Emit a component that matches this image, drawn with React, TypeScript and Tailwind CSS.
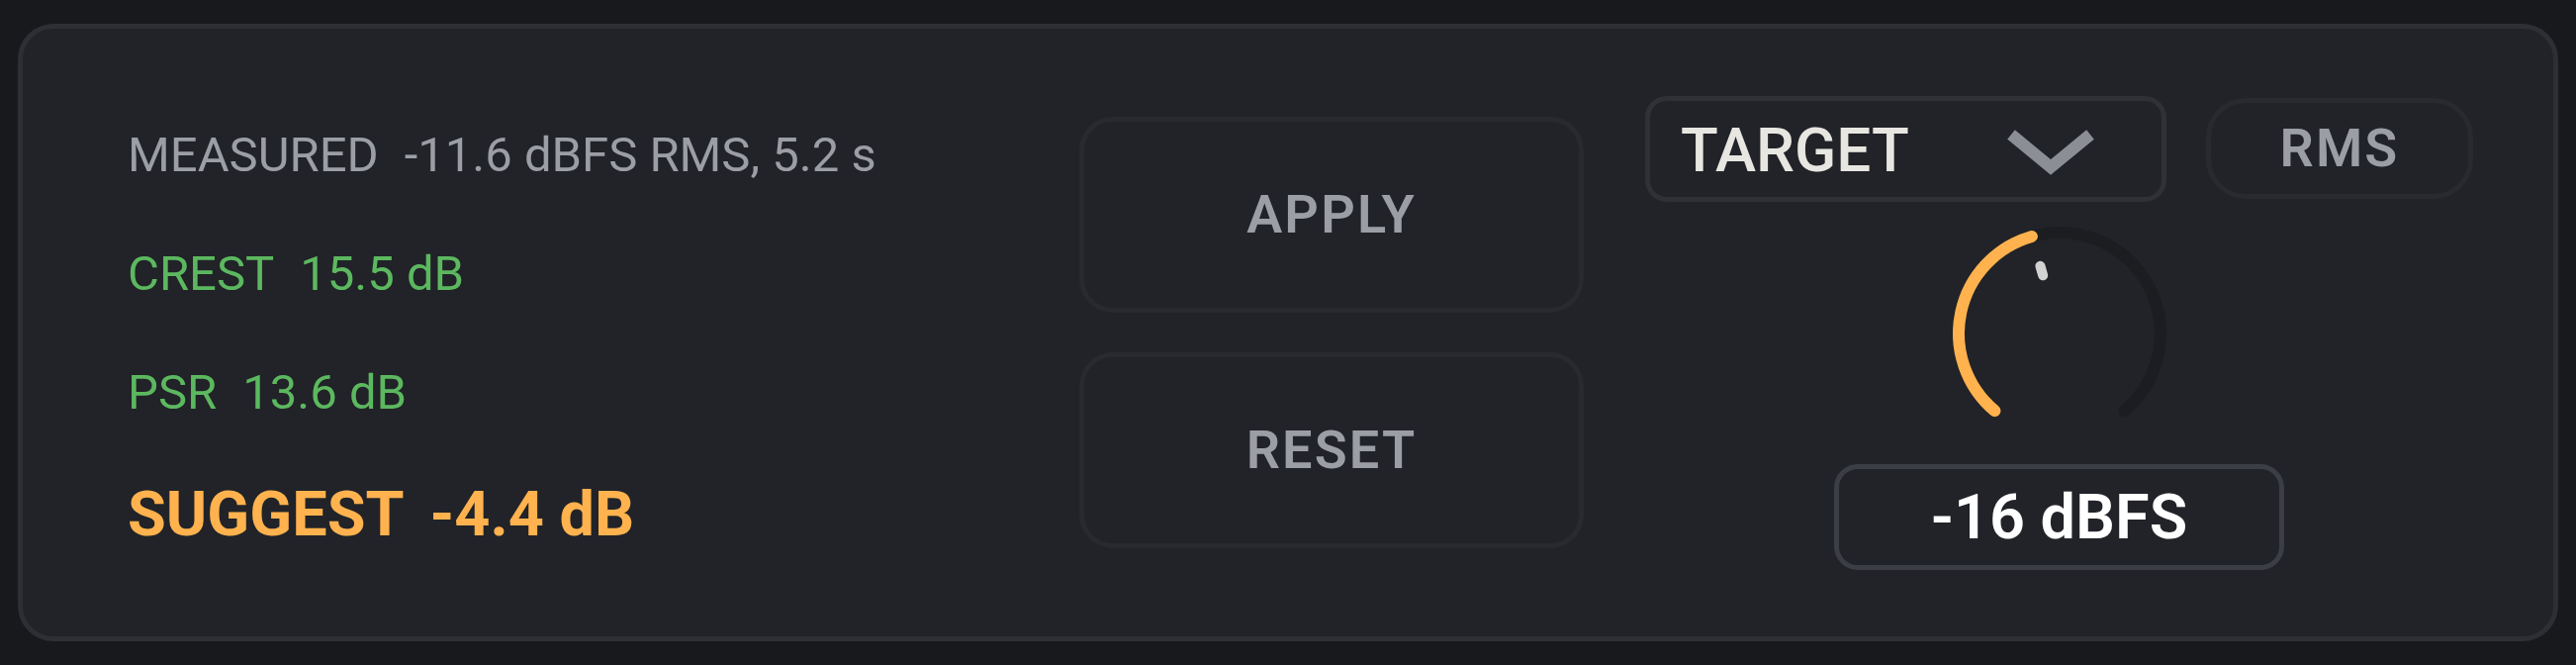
const stats = [
    { label: "MEASURED", value: "-11.6 dBFS RMS, 5.2 s", color: "text-[#9b9ea4]" },
    { label: "CREST", value: "15.5 dB", color: "text-[#5cb85f]" },
    { label: "PSR", value: "13.6 dB", color: "text-[#5cb85f]" },
];

// knob arc helpers, angle in degrees clockwise from 12 o'clock
const pt = (deg: number, r: number) => {
    const a = (deg * Math.PI) / 180;
    return `${(108 + r * Math.sin(a)).toFixed(2)} ${(108 - r * Math.cos(a)).toFixed(2)}`;
};

function Knob({ angle }: { angle: number }) {
    const start = -140;
    const end = 140;
    return (
        <svg width="216" height="216" viewBox="0 0 216 216" className="block">
            <path d={`M ${pt(start, 102)} A 102 102 0 1 1 ${pt(end, 102)}`} fill="none" stroke="#1b1d20" strokeWidth={12} strokeLinecap="round" />
            <path d={`M ${pt(start, 102)} A 102 102 0 0 1 ${pt(angle, 102)}`} fill="none" stroke="#ffb24e" strokeWidth={12} strokeLinecap="round" />
            <path d={`M ${pt(angle, 61)} L ${pt(angle, 71)}`} stroke="#d2d2d2" strokeWidth={10} strokeLinecap="round" />
        </svg>
    );
}

export default function App() {
    return (
        <div className="w-full h-[672px] bg-[#18191c] px-[18px] py-[24px] font-['Roboto',sans-serif]">
            <div className="flex h-[624px] items-center rounded-[36px] border-[5px] border-[#2d2f34] bg-[#212328] pl-[106px] pr-[81px]">

                {/* readouts */}
                <div className="flex-1 flex flex-col gap-[71px] mt-[11px]">
                    {stats.map((s) => (
                        <div key={s.label} className={`flex gap-[26px] text-[49px] leading-none ${s.color}`}>
                            <span>{s.label}</span>
                            <span>{s.value}</span>
                        </div>
                    ))}
                    <div className="flex gap-[26px] text-[63px] leading-none font-bold text-[#ffb24e] -mt-[4px]">
                        <span>SUGGEST</span>
                        <span>-4.4 dB</span>
                    </div>
                </div>

                {/* actions */}
                <div className="w-[510px] flex flex-col gap-[40px]">
                    {["APPLY", "RESET"].map((b) => (
                        <button
                            key={b}
                            className="h-[198px] flex items-center justify-center rounded-[34px] border-[5px] border-[#282a2f] text-[54px] leading-none font-semibold tracking-[0.04em] text-[#9b9ea4]"
                        >
                            {b}
                        </button>
                    ))}
                </div>

                {/* target */}
                <div className="w-[837px] ml-[62px] flex flex-col items-center">
                    <div className="flex items-center gap-[40px]">
                        <div className="w-[527px] h-[107px] flex items-center justify-between rounded-[22px] border-[5px] border-[#2f3136] pl-[31px] pr-[66px]">
                            <span className="text-[62px] leading-none font-medium text-[#e8e6e1] mt-[4px]">TARGET</span>
                            <svg width="92" height="50" viewBox="0 0 92 50" className="shrink-0 mt-[12px]">
                                <polyline points="6,5 46,38 86,5" fill="none" stroke="#8b8e94" strokeWidth={12} strokeLinejoin="miter" />
                            </svg>
                        </div>
                        <button className="w-[270px] h-[102px] flex items-center justify-center rounded-[40px] border-[5px] border-[#282a2f] text-[54px] leading-none font-semibold tracking-[0.04em] text-[#9b9ea4]">
                            RMS
                        </button>
                    </div>
                    <div className="mt-[25px]">
                        <Knob angle={-16} />
                    </div>
                    <div className="mt-[24px] w-[455px] h-[107px] flex items-center justify-center rounded-[24px] border-[5px] border-[#3b3e44] text-[63px] leading-none font-semibold text-white">
                        -16 dBFS
                    </div>
                </div>
            </div>
        </div>
    );
}
